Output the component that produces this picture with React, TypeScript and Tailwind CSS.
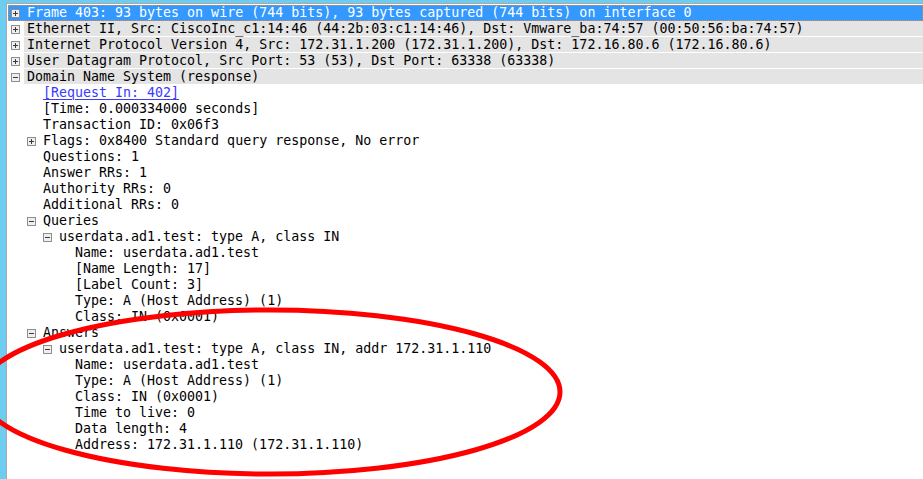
import React from "react";

type Row = { level: number; text: string; box?: "plus" | "minus"; top?: boolean; selected?: boolean; link?: boolean };

const rows: Row[] = [
  { level: 0, box: "plus", top: true, selected: true, text: "Frame 403: 93 bytes on wire (744 bits), 93 bytes captured (744 bits) on interface 0" },
  { level: 0, box: "plus", top: true, text: "Ethernet II, Src: CiscoInc_c1:14:46 (44:2b:03:c1:14:46), Dst: Vmware_ba:74:57 (00:50:56:ba:74:57)" },
  { level: 0, box: "plus", top: true, text: "Internet Protocol Version 4, Src: 172.31.1.200 (172.31.1.200), Dst: 172.16.80.6 (172.16.80.6)" },
  { level: 0, box: "plus", top: true, text: "User Datagram Protocol, Src Port: 53 (53), Dst Port: 63338 (63338)" },
  { level: 0, box: "minus", top: true, text: "Domain Name System (response)" },
  { level: 1, link: true, text: "[Request In: 402]" },
  { level: 1, text: "[Time: 0.000334000 seconds]" },
  { level: 1, text: "Transaction ID: 0x06f3" },
  { level: 1, box: "plus", text: "Flags: 0x8400 Standard query response, No error" },
  { level: 1, text: "Questions: 1" },
  { level: 1, text: "Answer RRs: 1" },
  { level: 1, text: "Authority RRs: 0" },
  { level: 1, text: "Additional RRs: 0" },
  { level: 1, box: "minus", text: "Queries" },
  { level: 2, box: "minus", text: "userdata.ad1.test: type A, class IN" },
  { level: 3, text: "Name: userdata.ad1.test" },
  { level: 3, text: "[Name Length: 17]" },
  { level: 3, text: "[Label Count: 3]" },
  { level: 3, text: "Type: A (Host Address) (1)" },
  { level: 3, text: "Class: IN (0x0001)" },
  { level: 1, box: "minus", text: "Answers" },
  { level: 2, box: "minus", text: "userdata.ad1.test: type A, class IN, addr 172.31.1.110" },
  { level: 3, text: "Name: userdata.ad1.test" },
  { level: 3, text: "Type: A (Host Address) (1)" },
  { level: 3, text: "Class: IN (0x0001)" },
  { level: 3, text: "Time to live: 0" },
  { level: 3, text: "Data length: 4" },
  { level: 3, text: "Address: 172.31.1.110 (172.31.1.110)" },
];

const indent = ["pl-0", "pl-[16px]", "pl-[32px]", "pl-[48px]"];

function Box({ kind }: { kind: "plus" | "minus" }) {
  return (
    <span className="relative block w-[9px] h-[9px] border border-[#8e8e8e] bg-[#efefef]">
      <span className="absolute left-[1px] top-[3px] w-[5px] h-[1px] bg-[#3a3a3a]" />
      {kind === "plus" && <span className="absolute left-[3px] top-[1px] w-[1px] h-[5px] bg-[#3a3a3a]" />}
    </span>
  );
}

export default function App() {
  return (
    <div
      className="relative w-[923px] h-[479px] overflow-hidden bg-white flex flex-col"
      style={{ fontFamily: '"DejaVu Sans Mono", "Liberation Mono", monospace' }}
    >
      <div className="h-[3px] bg-[#6ccdf0] shrink-0" />
      <div className="flex flex-1 min-h-0">
        <div className="w-[6px] bg-[#6ccdf0] shrink-0" />
        <div className="flex-1 border-l border-t border-[#a9a9a9] pt-[1px] pl-[1px] text-[13.3px] leading-[16px] text-black">
          {rows.map((r, i) => (
            <div
              key={i}
              className={
                "flex h-[16px] items-stretch whitespace-pre " +
                (r.selected ? "bg-[#3399ff] outline outline-1 outline-dotted outline-[#e8893a] -outline-offset-1 text-white " : "")
              }
            >
              <div className={"flex shrink-0 " + indent[r.level]}>
                <div className="w-[16px] flex items-center pl-[3px]">{r.box && <Box kind={r.box} />}</div>
              </div>
              <div
                className={
                  "flex-1 pl-[3px] flex items-start " +
                  (r.top && !r.selected ? "bg-[#e4e4e4] h-[15px] " : "")
                }
              >
                {r.link ? (
                  <span className="text-[#3a3aff] underline decoration-1 underline-offset-2">{r.text}</span>
                ) : (
                  <span>{r.text}</span>
                )}
              </div>
            </div>
          ))}
        </div>
      </div>
      <svg className="absolute left-0 top-0 pointer-events-none" width="923" height="479">
        <ellipse cx="270" cy="392" rx="290" ry="82" fill="none" stroke="#ff0000" strokeWidth="5" />
      </svg>
    </div>
  );
}
